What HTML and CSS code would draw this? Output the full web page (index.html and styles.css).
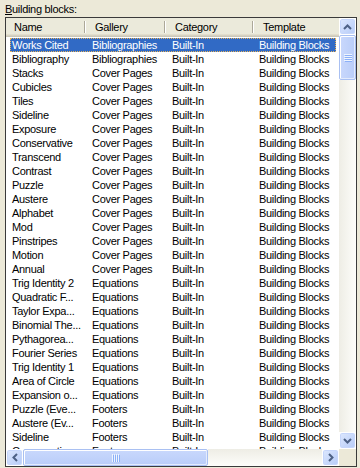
FILE: index.html
```html
<!DOCTYPE html>
<html lang="en">

<head>
    <meta charset="UTF-8">
    <meta name="viewport" content="width=device-width, initial-scale=1.0">
    <title>Building blocks</title>
    <link rel="stylesheet" href="styles.css">
</head>

<body>
    <div class="label"><u>B</u>uilding blocks:</div>
    <div class="listbox">
        <div class="content">
            <div class="header">
                <div class="hcell c-name">Name</div>
                <div class="hcell c-gallery">Gallery</div>
                <div class="hcell c-category">Category</div>
                <div class="hcell c-template">Template</div>
                <div class="hcell c-rest"></div>
            </div>
            <div class="rows">
                <div class="row selected"><span class="name">Works Cited</span><span class="gallery">Bibliographies</span><span class="category">Built-In</span><span class="template">Building Blocks</span></div>
                <div class="row"><span class="name">Bibliography</span><span class="gallery">Bibliographies</span><span class="category">Built-In</span><span class="template">Building Blocks</span></div>
                <div class="row"><span class="name">Stacks</span><span class="gallery">Cover Pages</span><span class="category">Built-In</span><span class="template">Building Blocks</span></div>
                <div class="row"><span class="name">Cubicles</span><span class="gallery">Cover Pages</span><span class="category">Built-In</span><span class="template">Building Blocks</span></div>
                <div class="row"><span class="name">Tiles</span><span class="gallery">Cover Pages</span><span class="category">Built-In</span><span class="template">Building Blocks</span></div>
                <div class="row"><span class="name">Sideline</span><span class="gallery">Cover Pages</span><span class="category">Built-In</span><span class="template">Building Blocks</span></div>
                <div class="row"><span class="name">Exposure</span><span class="gallery">Cover Pages</span><span class="category">Built-In</span><span class="template">Building Blocks</span></div>
                <div class="row"><span class="name">Conservative</span><span class="gallery">Cover Pages</span><span class="category">Built-In</span><span class="template">Building Blocks</span></div>
                <div class="row"><span class="name">Transcend</span><span class="gallery">Cover Pages</span><span class="category">Built-In</span><span class="template">Building Blocks</span></div>
                <div class="row"><span class="name">Contrast</span><span class="gallery">Cover Pages</span><span class="category">Built-In</span><span class="template">Building Blocks</span></div>
                <div class="row"><span class="name">Puzzle</span><span class="gallery">Cover Pages</span><span class="category">Built-In</span><span class="template">Building Blocks</span></div>
                <div class="row"><span class="name">Austere</span><span class="gallery">Cover Pages</span><span class="category">Built-In</span><span class="template">Building Blocks</span></div>
                <div class="row"><span class="name">Alphabet</span><span class="gallery">Cover Pages</span><span class="category">Built-In</span><span class="template">Building Blocks</span></div>
                <div class="row"><span class="name">Mod</span><span class="gallery">Cover Pages</span><span class="category">Built-In</span><span class="template">Building Blocks</span></div>
                <div class="row"><span class="name">Pinstripes</span><span class="gallery">Cover Pages</span><span class="category">Built-In</span><span class="template">Building Blocks</span></div>
                <div class="row"><span class="name">Motion</span><span class="gallery">Cover Pages</span><span class="category">Built-In</span><span class="template">Building Blocks</span></div>
                <div class="row"><span class="name">Annual</span><span class="gallery">Cover Pages</span><span class="category">Built-In</span><span class="template">Building Blocks</span></div>
                <div class="row"><span class="name">Trig Identity 2</span><span class="gallery">Equations</span><span class="category">Built-In</span><span class="template">Building Blocks</span></div>
                <div class="row"><span class="name">Quadratic F...</span><span class="gallery">Equations</span><span class="category">Built-In</span><span class="template">Building Blocks</span></div>
                <div class="row"><span class="name">Taylor Expa...</span><span class="gallery">Equations</span><span class="category">Built-In</span><span class="template">Building Blocks</span></div>
                <div class="row"><span class="name">Binomial The...</span><span class="gallery">Equations</span><span class="category">Built-In</span><span class="template">Building Blocks</span></div>
                <div class="row"><span class="name">Pythagorea...</span><span class="gallery">Equations</span><span class="category">Built-In</span><span class="template">Building Blocks</span></div>
                <div class="row"><span class="name">Fourier Series</span><span class="gallery">Equations</span><span class="category">Built-In</span><span class="template">Building Blocks</span></div>
                <div class="row"><span class="name">Trig Identity 1</span><span class="gallery">Equations</span><span class="category">Built-In</span><span class="template">Building Blocks</span></div>
                <div class="row"><span class="name">Area of Circle</span><span class="gallery">Equations</span><span class="category">Built-In</span><span class="template">Building Blocks</span></div>
                <div class="row"><span class="name">Expansion o...</span><span class="gallery">Equations</span><span class="category">Built-In</span><span class="template">Building Blocks</span></div>
                <div class="row"><span class="name">Puzzle (Eve...</span><span class="gallery">Footers</span><span class="category">Built-In</span><span class="template">Building Blocks</span></div>
                <div class="row"><span class="name">Austere (Ev...</span><span class="gallery">Footers</span><span class="category">Built-In</span><span class="template">Building Blocks</span></div>
                <div class="row"><span class="name">Sideline</span><span class="gallery">Footers</span><span class="category">Built-In</span><span class="template">Building Blocks</span></div>
                <div class="row"><span class="name">Conservative</span><span class="gallery">Footers</span><span class="category">Built-In</span><span class="template">Building Blocks</span></div>
            </div>
        </div>

        <div class="vscroll">
            <div class="sb-btn">
                <svg width="9" height="6" viewBox="0 0 9 6"><path d="M1 5 L4.5 1.5 L8 5" fill="none" stroke="#4d6185" stroke-width="2"/></svg>
            </div>
            <div class="thumb v-thumb">
                <svg width="8" height="8" viewBox="0 0 8 8">
                    <path d="M0 0.5h8M0 2.5h8M0 4.5h8M0 6.5h8" stroke="#eef4fe"/>
                    <path d="M1 1.5h7M1 3.5h7M1 5.5h7M1 7.5h7" stroke="#8cb0f8"/>
                </svg>
            </div>
            <div class="track v-track"></div>
            <div class="sb-btn">
                <svg width="9" height="6" viewBox="0 0 9 6"><path d="M1 1 L4.5 4.5 L8 1" fill="none" stroke="#4d6185" stroke-width="2"/></svg>
            </div>
        </div>

        <div class="hscroll">
            <div class="sb-btn">
                <svg width="6" height="9" viewBox="0 0 6 9"><path d="M5 1 L1.5 4.5 L5 8" fill="none" stroke="#4d6185" stroke-width="2"/></svg>
            </div>
            <div class="thumb h-thumb">
                <svg width="8" height="8" viewBox="0 0 8 8">
                    <path d="M0.5 0v8M2.5 0v8M4.5 0v8M6.5 0v8" stroke="#eef4fe"/>
                    <path d="M1.5 1v7M3.5 1v7M5.5 1v7M7.5 1v7" stroke="#8cb0f8"/>
                </svg>
            </div>
            <div class="track h-track"></div>
            <div class="sb-btn">
                <svg width="6" height="9" viewBox="0 0 6 9"><path d="M1 1 L4.5 4.5 L1 8" fill="none" stroke="#4d6185" stroke-width="2"/></svg>
            </div>
        </div>

        <div class="corner"></div>
    </div>
</body>

</html>
```

FILE: styles.css
```css
/* Dialog list styles */
body {
    margin: 0;
    padding: 0;
    background-color: #ece9d8;
    font-family: "Liberation Sans", Arial, sans-serif;
    font-size: 11px;
    letter-spacing: -0.3px;
    color: #000;
}

.label {
    height: 14px;
    padding: 3px 0 0 5px;
    line-height: 13px;
}

.listbox {
    width: 352px;
    height: 450px;
    margin-left: 5px;
    box-sizing: border-box;
    border: 1px solid #3a3a3a;
    background-color: #fff;
    display: grid;
    grid-template-columns: 333px 17px;
    grid-template-rows: 431px 17px;
}

.content {
    overflow: hidden;
}

.header {
    display: flex;
    width: 541px;
    height: 19px;
    background-color: #ebeadb;
    box-shadow: inset 0 -1px #cbc7b8, inset 0 -2px #d6d2c2, inset 0 -3px #e2decd;
}

.hcell {
    position: relative;
    flex: none;
    box-sizing: border-box;
    padding-left: 9px;
    line-height: 18px;
    white-space: nowrap;
}

.hcell::after {
    content: "";
    position: absolute;
    right: 1px;
    top: 3px;
    bottom: 4px;
    width: 1px;
    background-color: #aca899;
    box-shadow: 1px 0 #fff;
}

.c-name {
    width: 80px;
    padding-left: 8px;
}

.c-gallery {
    width: 80px;
}

.c-category {
    width: 88px;
}

.c-template {
    width: 120px;
}

.c-rest {
    flex: 1;
}

.c-rest::after {
    display: none;
}

.rows {
    padding-top: 1px;
}

.row {
    display: flex;
    width: 326px;
    height: 14px;
    margin-left: 4px;
    box-sizing: border-box;
    line-height: 14px;
    white-space: nowrap;
}

.row span {
    flex: none;
    box-sizing: border-box;
    overflow: hidden;
}

.name {
    width: 76px;
    padding-left: 2px;
}

.gallery {
    width: 80px;
    padding-left: 6px;
}

.category {
    width: 88px;
    padding-left: 6px;
}

.template {
    width: 82px;
    padding-left: 5px;
}

.row.selected {
    background-color: #316ac5;
    color: #fff;
    outline: 1px dotted #e8b45c;
    outline-offset: -1px;
}

/* scroll bars */
.vscroll {
    display: flex;
    flex-direction: column;
}

.hscroll {
    display: flex;
}

.sb-btn {
    flex: none;
    width: 17px;
    height: 17px;
    box-sizing: border-box;
    border: 1px solid #fff;
    border-radius: 3px;
    background: linear-gradient(135deg, #dde8fe, #b6cbf8);
    box-shadow: inset 0 0 0 1px #c6d6fb;
    display: flex;
    align-items: center;
    justify-content: center;
}

.thumb {
    flex: none;
    box-sizing: border-box;
    border: 1px solid #a9c0f2;
    border-radius: 2px;
    box-shadow: inset 1px 1px #fff, inset -1px -1px #e3ebfd;
    display: flex;
    align-items: center;
    justify-content: center;
}

.v-thumb {
    height: 45px;
    background: linear-gradient(to right, #c9d8fc, #b9cdf9);
}

.h-thumb {
    width: 185px;
    background: linear-gradient(to bottom, #c9d8fc, #b9cdf9);
}

.track {
    flex: 1;
}

.v-track {
    background: linear-gradient(to right, #eeede5, #fdfdfa);
}

.h-track {
    background: linear-gradient(to bottom, #eeede5, #fdfdfa);
}

.corner {
    background-color: #ece9d8;
}
```
